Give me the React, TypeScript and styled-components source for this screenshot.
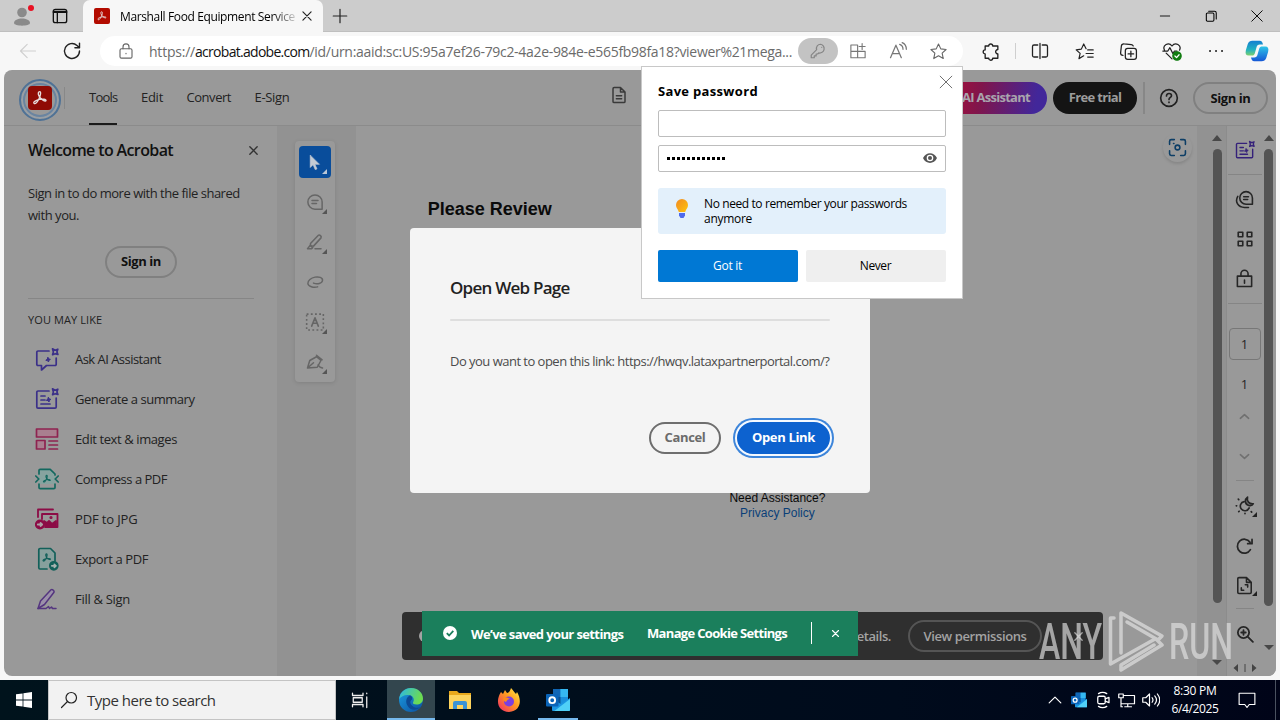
import React, {ReactNode} from 'react'
import styled, {createGlobalStyle} from 'styled-components'

type IconProps = {
  size?: number
  color?: string
  fill?: string
  width?: number
  children: ReactNode
}

const Icon = ({size = 20, color = 'currentColor', fill = 'none', width = 1.5, children}: IconProps) => (
  <svg width={size} height={size} viewBox="0 0 24 24" fill={fill} stroke={color} strokeWidth={width}
    strokeLinecap="round" strokeLinejoin="round">
    {children}
  </svg>
)

const acrobatPath = 'M4.500 18.500c-1.500-1.600 3-4 7-4.700s8.500-.3 8 1.400-5.800-.8-8.300-4.900S10 4 11.700 4s1.300 4.800-1.200 9.500S6 20 4.500 18.500z'
const sparkle = 'M17.500 1.800l2.600 1.400 2.700-1-.9 2.700 1 2.600-2.700-.8-2.600 1 .8-2.800z'

const AcrobatMark = ({size, color, round}: { size: number, color: string, round: number }) => (
  <svg width={size} height={size} viewBox="0 0 24 24">
    <rect width="24" height="24" rx={round} fill={color}/>
    <path d={acrobatPath} transform="translate(2.400 2.400) scale(.8)" fill="none" stroke="#e6dcdc" strokeWidth="1.700"/>
  </svg>
)

const SummaryIcon = ({size = 24, color = '#3b3089'}) => (
  <Icon size={size} color={color} width={1.700}>
    <path d="M14 4H3a1.200 1.200 0 0 0-1.200 1.200V20A1.200 1.200 0 0 0 3 21.200h17a1.200 1.200 0 0 0 1.200-1.200v-9"/>
    <path d="M6 9h4M6 13h4M6 17h9"/>
    <path d={sparkle}/>
    <path d="M13.500 10.500l.8 1.400 1.600.5-1.500.9-.4 1.700-1-1.400-1.700-.3 1.300-1z" fill={color} strokeWidth={1}/>
  </Icon>
)

const OutlookIcon = ({size}: { size: number }) => (
  <svg width={size} height={size} viewBox="0 0 24 24">
    <path d="M7 1h15v16H7z" fill="#1a8fdc"/>
    <path d="M7 1h7.500v8H7z" fill="#1066b5"/>
    <path d="M14.500 1H22v8h-7.500z" fill="#35b8f1"/>
    <path d="M7 9h7.500v7H7z" fill="#0b5091"/>
    <path d="M6 11l9 5 9-6v12a1 1 0 0 1-1 1H7a1 1 0 0 1-1-1z" fill="#1b96e3"/>
    <path d="M9 22.500L24 11v11a1 1 0 0 1-1 1H8z" fill="#50d0f7"/>
    <rect y="6" width="12.500" height="12.500" rx="1" fill="#0a64b8"/>
    <circle cx="6.200" cy="12.200" r="2.900" fill="none" stroke="#fff" strokeWidth="1.900"/>
  </svg>
)

const tools = [
  {
    name: 'Ask AI Assistant', spacing: -0.53, icon: (
      <Icon size={24} color="#3b3089" width={1.700}>
        <path d="M14 4H3a1.200 1.200 0 0 0-1.200 1.200v12A1.200 1.200 0 0 0 3 18.500h3.500V23l5-4.500H20a1.200 1.200 0 0 0 1.200-1.300V11"/>
        <path d={sparkle}/>
        <path d="M13 10.500l.8 1.400 1.600.5-1.500.9-.4 1.700-1-1.400-1.700-.3 1.300-1z" fill="#3b3089" strokeWidth={1}/>
      </Icon>
    ),
  },
  {name: 'Generate a summary', spacing: -0.46, icon: <SummaryIcon/>},
  {
    name: 'Edit text & images', spacing: -0.4, icon: (
      <Icon size={24} color="#8e2350" width={1.700}>
        <rect x="1.500" y="2" width="21" height="8" fill="#a97f8f"/>
        <rect x="1.500" y="13.500" width="8.500" height="8.500" fill="#a97f8f"/>
        <path d="M14 14h8.500M14 18h8.500M14 22h8.500"/>
      </Icon>
    ),
  },
  {
    name: 'Compress a PDF', spacing: -0.5, icon: (
      <Icon size={24} color="#13685f" width={1.700}>
        <path d="M4 7V3.500A1.200 1.200 0 0 1 5.200 2.300h10L20 7v10H4z" fill="#86a39f" stroke="none"/>
        <path d="M4 7V3.500A1.200 1.200 0 0 1 5.200 2.300h10L20 7v1M4 17v3.500a1.200 1.200 0 0 0 1.200 1.200h13.600A1.200 1.200 0 0 0 20 20.500V17"/>
        <path d="M.8 9l3 3-3 3M23.200 9l-3 3 3 3"/>
        <path d={acrobatPath} transform="translate(6.500 6.500) scale(.45)" strokeWidth={2.400}/>
      </Icon>
    ),
  },
  {
    name: 'PDF to JPG', spacing: -0.14, icon: (
      <Icon size={24} color="#8c0c46" width={1.800}>
        <path d="M3 10V2.500h15M10 20h12.500V7H7v5"/>
        <path d="M9 14l3 2 2-2 3 3 4-3v6H11z" fill="#8c0c46"/>
        <circle cx="16" cy="10.500" r=".7"/>
        <circle cx="5" cy="17.500" r="4.200" fill="#8c0c46"/>
        <path d="M2.800 17.500h4M5.500 16l1.700 1.500L5.500 19" stroke="#a9a0a4"/>
      </Icon>
    ),
  },
  {
    name: 'Export a PDF', spacing: -0.39, icon: (
      <Icon size={24} color="#13605a" width={1.700}>
        <path d="M12 22H5a1.200 1.200 0 0 1-1.200-1.200V2.700A1.200 1.200 0 0 1 5 1.500h10.500L20 6v8" fill="#87a09d"/>
        <path d={acrobatPath} transform="translate(6 5) scale(.48)" strokeWidth={2.400}/>
        <circle cx="18.800" cy="18.800" r="4" fill="#13605a"/>
        <path d="M16.800 18.800h4M19.300 17.300l1.700 1.500-1.700 1.500" stroke="#a6b3b1"/>
      </Icon>
    ),
  },
  {
    name: 'Fill & Sign', spacing: -0.29, icon: (
      <Icon size={24} color="#54357f" width={1.500}>
        <path d="M3 21.500l2.500-7.500L16 2.800c1-.9 3.800.7 3 2.500L9.500 17.500z" fill="#9b90a9"/>
        <path d="M3 21.500h8l2.500-2 1 2 2-1.500 1 1.500H21"/>
      </Icon>
    ),
  },
]

const quickTools = [
  {
    name: 'select', corner: true, selected: true,
    icon: <Icon size={17} color="#c4cbd4" fill="#c4cbd4" width={1}><path d="M6 2v17l4-4 3 7 2.500-1-3-6.500h6z"/></Icon>,
  },
  {
    name: 'comment', corner: true,
    icon: <Icon size={18} width={2}><path d="M12 2.500a9.500 9.500 0 1 0 0 19h9.500V12A9.500 9.500 0 0 0 12 2.500zM8 10h8M8 14h6"/></Icon>,
  },
  {
    name: 'highlight', corner: true,
    icon: <Icon size={18} width={2}><path d="M6 14L16.500 3c1.500-1.300 4.800 1.500 3.500 3.500L10 17.500l-4-.5z"/><path d="M2 21l3.500-4.500L9 19.500 7.500 21zM12 21h8"/></Icon>,
  },
  {
    name: 'draw',
    icon: <Icon size={18} width={2}><path d="M10 13.500c5 2 11.500.5 12-3.500C22.500 6 17 4.500 12 5.500S2 10 2.500 14s7.500 6 13 4.500"/></Icon>,
  },
  {
    name: 'text', corner: true,
    icon: (
      <Icon size={20} width={1.900}>
        <rect x="2" y="2.500" width="20" height="19" strokeDasharray="2.200 2.800" strokeLinecap="butt"/>
        <path d="M8 17l4-10 4 10M9.500 13.500h5"/>
      </Icon>
    ),
  },
  {
    name: 'sign', corner: true,
    icon: <Icon size={18} width={2}><path d="M2 20l3-10 9-5 6 5-5 9zM14 3l7.500 6M2 20l8-7M16 16l3 3 3 1"/></Icon>,
  },
]

export default function App() {
  return (
    <Screen>
      <GlobalStyle/>
      <TabStrip/>
      <AddressRow/>
      <PageFrame>
        <Header/>
        <PageBody>
          <Sidebar/>
          <QuickBar/>
          <Document/>
          <ScrollBar bottom={603} arrow={663}/>
          <Rail/>
          <ScrollBar bottom={606} arrow={648} wide/>
        </PageBody>
      </PageFrame>
      <Taskbar/>
      <PermissionToast/>
      <OpenDialog/>
      <CookieToast/>
      <PasswordPopup/>
      <Watermark/>
    </Screen>
  )
}

const TabStrip = () => (
  <Strip>
    <StripIcon $width={44}>
      <svg width="24" height="24" viewBox="0 0 24 24">
        <circle cx="12" cy="8.500" r="4.800" fill="#8a8a8a"/>
        <path d="M4 19c0-6 16-6 16 0 0 3.500-16 3.500-16 0z" fill="#8a8a8a"/>
        <circle cx="21" cy="4" r="3" fill="#e81123"/>
      </svg>
    </StripIcon>
    <StripIcon $width={32}>
      <Icon size={16} color="#111" width={2}><rect x="2" y="2" width="20" height="20" rx="3"/><path d="M2 6.500h20M8 6v16M2 5h20"/></Icon>
    </StripIcon>
    <Tab>
      <AcrobatMark size={16} color="#b30b00" round={3}/>
      <TabTitle>Marshall Food Equipment Service</TabTitle>
      <Icon size={14} color="#222" width={2}><path d="M5 5l14 14M19 5L5 19"/></Icon>
    </Tab>
    <StripIcon $width={34}><Icon size={18} color="#222" width={1.600}><path d="M12 3v18M3 12h18"/></Icon></StripIcon>
    <WindowButtons>
      <StripIcon $width={46}><Icon size={14} color="#000"><path d="M4 12h16"/></Icon></StripIcon>
      <StripIcon $width={46}>
        <Icon size={14} color="#000" width={1.800}><rect x="4" y="7" width="13" height="14" rx="2"/><path d="M8 4h10a3 3 0 0 1 3 3v10"/></Icon>
      </StripIcon>
      <StripIcon $width={46}><Icon size={14} color="#000" width={1.600}><path d="M3 3l18 18M21 3L3 21"/></Icon></StripIcon>
    </WindowButtons>
  </Strip>
)

const AddressRow = () => (
  <Toolbar>
    <ToolCell $width={56}><Icon size={20} color="#cfcfcf" width={1.400}><path d="M21 12H3M11 4l-8 8 8 8"/></Icon></ToolCell>
    <ToolCell $width={32}><Icon size={20} color="#222" width={1.700}><path d="M21 12a9 9 0 1 1-3-6.700L21 8M21 2.500V8h-5.500"/></Icon></ToolCell>
    <Address>
      <Icon size={18} color="#666"><rect x="4" y="9" width="16" height="12.500" rx="2"/><path d="M8 9V6.500a4 4 0 0 1 8 0V9M12 15v.5"/></Icon>
      <Url>
        <Text $size={14} $spacing={-0.22}>https://</Text>
        <Text $size={14} $spacing={-0.71} $color="#111">acrobat.adobe.com</Text>
        <Text $size={14} $spacing={-0.31}>/id/urn:aaid:sc:US:95a7ef26-79c2-4a2e-984e-e565fb98fa18?viewer%21mega...</Text>
      </Url>
      <KeyPill>
        <Icon size={18} color="#858585" width={1.600}><path d="M15.500 3a5.500 5.500 0 0 0-5.300 7.200L3 17.500V21h4v-2.500h2.500V16h2l1.500-1.400A5.500 5.500 0 1 0 15.500 3zM17 7v.1"/></Icon>
      </KeyPill>
      <ToolCell $width={40}>
        <Icon size={18} color="#777"><path d="M2.500 4h9v17h-9zM2.500 12.500h19V21h-19M17.500 2v8M13.500 6h8"/></Icon>
      </ToolCell>
      <ToolCell $width={40}>
        <Icon size={20} color="#777"><path d="M3 20L9.500 5 16 20M5.500 15h8M14 4c3 1 4 3 4 6M17 2c4 1.500 5 4.500 5 8"/></Icon>
      </ToolCell>
      <ToolCell $width={40}>
        <Icon size={19} color="#666" width={1.400}><path d="M12 2.500l2.900 6.200 6.700.8-5 4.600 1.400 6.800-6-3.400-6 3.400 1.400-6.800-5-4.600 6.700-.8z"/></Icon>
      </ToolCell>
    </Address>
    <PuzzleCell>
      <Icon size={19} color="#222" width={1.700}><path d="M8.500 5a2.500 2.500 0 0 1 5 0H20v4.500a2.600 2.600 0 1 0 0 5.500v5.500h-6.500a2.500 2.500 0 0 1-5 0H4V15a2.500 2.500 0 0 1 0-5V5z"/></Icon>
    </PuzzleCell>
    <ToolDivider/>
    <ToolCell $width={44}>
      <Icon size={18} color="#222" width={1.700}><path d="M9 4H4a2 2 0 0 0-2 2v12a2 2 0 0 0 2 2h5M15 4h5a2 2 0 0 1 2 2v12a2 2 0 0 1-2 2h-5M12 2v20"/></Icon>
    </ToolCell>
    <ToolCell $width={44}>
      <Icon size={19} color="#222" width={1.500}><path d="M14 8.500L11 2.500 8 9l-6.500.9 5 4.500L5 21l6-3.500M16 10h7M14 14.500h9M16 19h7"/></Icon>
    </ToolCell>
    <ToolCell $width={44}>
      <Icon size={19} color="#222" width={1.600}>
        <rect x="8" y="8" width="14" height="14" rx="3"/>
        <path d="M15 11.500v7M11.500 15h7M5 17a3 3 0 0 1-3-3l1-9a3 3 0 0 1 3.500-2.500l9 .8A3 3 0 0 1 18 5"/>
      </Icon>
    </ToolCell>
    <ToolCell $width={44}>
      <Icon size={20} color="#222" width={1.500}>
        <path d="M3 11C0 5 8 .5 12 6c4-5.500 12-1 9 5M1 12h6l2.500-4L13 15l2-3h3M5 14.500l7 7"/>
        <circle cx="18" cy="18" r="5" fill="#107c10" stroke="#107c10"/>
        <path d="M15.500 18l2 2 3-3.500" stroke="#fff"/>
      </Icon>
    </ToolCell>
    <ToolCell $width={44}>
      <Icon size={18} color="#222" width={2.600}><path d="M4 12h.1M12 12h.1M20 12h.1"/></Icon>
    </ToolCell>
    <ToolCell $width={38}>
      <svg width="24" height="24" viewBox="0 0 26 26">
        <defs>
          <linearGradient id="copLeft" x1="0" y1="0" x2="0" y2="1">
            <stop offset="0" stopColor="#157fd1"/><stop offset=".6" stopColor="#22b2c0"/><stop offset="1" stopColor="#7fd06c"/>
          </linearGradient>
          <linearGradient id="copRight" x1="0" y1="0" x2="0" y2="1">
            <stop offset="0" stopColor="#2ec5e8"/><stop offset="1" stopColor="#1558d6"/>
          </linearGradient>
        </defs>
        <path d="M8 2h8c2 0 3 1.500 3.500 4H16c-2 0-3 1-3.500 3l-2 7c-.6 1.500-1.500 2-3 2H4c-3 0-4-2-3-6l2-6.500C4 3 5.500 2 8 2z" fill="url(#copLeft)"/>
        <path d="M18 24h-8c-2 0-3-1.500-3.500-4H10c2 0 3-1 3.500-3l2-7c.6-1.500 1.500-2 3-2H22c3 0 4 2 3 6l-2 6.500c-1 2.500-2.500 3.500-5 3.500z" fill="url(#copRight)"/>
      </svg>
    </ToolCell>
  </Toolbar>
)

const Header = () => (
  <HeaderBar>
    <Logo><AcrobatMark size={24} color="#8f0b04" round={4}/></Logo>
    <LogoDivider/>
    <Menu>
      <MenuItem $active><Text $size={13} $spacing={-0.76}>Tools</Text></MenuItem>
      <MenuItem><Text $size={13} $spacing={-0.27}>Edit</Text></MenuItem>
      <MenuItem><Text $size={13} $spacing={-0.46}>Convert</Text></MenuItem>
      <MenuItem><Text $size={13} $spacing={-0.31}>E-Sign</Text></MenuItem>
    </Menu>
    <FileIcon>
      <Icon size={18} color="#3a3a3a" width={2}><path d="M14 2H5.500A1.500 1.500 0 0 0 4 3.500v17A1.500 1.500 0 0 0 5.500 22h13a1.500 1.500 0 0 0 1.500-1.500V8zM14 2v6h6M8.500 13h7M8.500 17h7"/></Icon>
    </FileIcon>
    <HeaderActions>
      <AiButton><Text $size={13} $weight={700} $spacing={-0.72}>AI Assistant</Text></AiButton>
      <TrialButton><Text $size={13} $weight={700} $spacing={-0.66}>Free trial</Text></TrialButton>
      <HeaderDivider/>
      <Icon size={20} color="#222" width={2}><circle cx="12" cy="12" r="10"/><path d="M9 9.500c0-4 6-3.500 6-.3 0 2-3 2.200-3 4.500M12 17v.3"/></Icon>
      <OutlineButton $width={75}><Text $size={13} $weight={700} $spacing={-0.42}>Sign in</Text></OutlineButton>
    </HeaderActions>
  </HeaderBar>
)

const Sidebar = () => (
  <Side>
    <SideHead>
      <Text $size={16} $weight={600} $spacing={-0.62} $color="#111">Welcome to Acrobat</Text>
      <Icon size={11} color="#333" width={3}><path d="M4 4l16 16M20 4L4 20"/></Icon>
    </SideHead>
    <SideText>
      <Text $size={13} $spacing={-0.48}>Sign in to do more with the file shared</Text>
      <Text $size={13} $spacing={-0.45}>with you.</Text>
    </SideText>
    <OutlineButton $width={72}><Text $size={13} $weight={700} $spacing={-0.42}>Sign in</Text></OutlineButton>
    <SideRule/>
    <SideLabel><Text $size={11} $spacing={0.1}>YOU MAY LIKE</Text></SideLabel>
    {tools.map(tool => (
      <SideItem key={tool.name}>
        {tool.icon}
        <Text $size={13} $spacing={tool.spacing}>{tool.name}</Text>
      </SideItem>
    ))}
  </Side>
)

const QuickBar = () => (
  <QuickColumn>
    <QuickCard>
      {quickTools.map(tool => (
        <QuickTool key={tool.name} $selected={tool.selected} $corner={tool.corner}>{tool.icon}</QuickTool>
      ))}
    </QuickCard>
  </QuickColumn>
)

const Document = () => (
  <DocArea>
    <DocTitle>Please Review</DocTitle>
    <DocTail>your.</DocTail>
    <DocFooter>Need Assistance?<DocLink>Privacy Policy</DocLink></DocFooter>
    <ScanButton>
      <Icon size={19} color="#0d3e66" width={2}>
        <path d="M2 8V4a2 2 0 0 1 2-2h4M16 2h4a2 2 0 0 1 2 2v4M22 16v4a2 2 0 0 1-2 2h-4M8 22H4a2 2 0 0 1-2-2v-4M7 7h.5"/>
        <circle cx="12" cy="12" r="3"/>
      </Icon>
    </ScanButton>
  </DocArea>
)

const ScrollBar = ({bottom, arrow, wide}: { bottom: number, arrow: number, wide?: boolean }) => (
  <Track $wide={wide}>
    <Arrow $up/>
    <Thumb $height={bottom - 149}/>
    <ArrowSpace $height={arrow - bottom - 3}/>
    <Arrow/>
  </Track>
)

const Rail = () => (
  <RailColumn>
    <RailCell $height={48}><SummaryIcon size={20} color="#35217a"/></RailCell>
    <RailRule/>
    <RailCell $height={49}>
      <Icon size={19} width={2}><path d="M14 2a8 8 0 1 0 0 16h8v-8a8 8 0 0 0-8-8zM11 8.500h6M11 12h5M3.500 8C-.5 15 4 22 12 22h5"/></Icon>
    </RailCell>
    <RailCell $height={30}>
      <Icon size={18} width={2.200}><path d="M3 3h6v6H3zM15 3h6v6h-6zM3 15h6v6H3zM15 15h6v6h-6z"/></Icon>
    </RailCell>
    <RailCell $height={49}>
      <Icon size={19} width={2}><rect x="3" y="9" width="18" height="13"/><path d="M7.500 9V6a4.500 4.500 0 0 1 9 0v3M12 14v4"/></Icon>
    </RailCell>
    <RailRule/>
    <PageBox>1</PageBox>
    <RailCell $height={48}>1</RailCell>
    <RailCell $height={16} $muted><Icon size={11} width={3.500}><path d="M3 16l9-8 9 8"/></Icon></RailCell>
    <RailCell $height={56} $top={8} $muted><Icon size={11} width={3.500}><path d="M3 8l9 8 9-8"/></Icon></RailCell>
    <RailRule $short/>
    <RailCell $height={48} $corner>
      <Icon width={2}>
        <path d="M11 8a5.500 5.500 0 1 0 6 7.500"/>
        <path d="M15 2.500c-1 5 1.500 8.500 7 8-2 4-9.500 2.500-9.500-3 0-2.500 1-4 2.500-5z" fill="#7d7d7d"/>
        <path d="M1.500 13h.5M4 5l.5.500M4.500 20l.5-.5M12 22.500V22M19.500 20l.5.500"/>
      </Icon>
    </RailCell>
    <RailCell $height={34}>
      <Icon size={19} width={2.200}><path d="M19.500 16A8.800 8.800 0 1 1 19 6.500M21.500 3v5.500H16"/></Icon>
    </RailCell>
    <RailCell $height={45} $corner>
      <Icon size={19} width={2}><path d="M14.500 2H5a1.500 1.500 0 0 0-1.500 1.500v17A1.500 1.500 0 0 0 5 22h14a1.500 1.500 0 0 0 1.500-1.500V8zM14.500 2v6h6M13 11h3v3M8 15v3h3"/></Icon>
    </RailCell>
    <RailRule $short/>
    <RailCell $height={50}>
      <Icon size={18} width={2.400}><circle cx="10" cy="10" r="7.500"/><path d="M10 7v6M7 10h6M15.500 15.500l7 7"/></Icon>
    </RailCell>
    <MiniScroll>
      <svg width="26" height="10" viewBox="0 0 26 10">
        <path d="M6 1v8L1.500 5zM20 1v8l4.500-4z" fill="#444"/><path d="M13 1v8" stroke="#444"/>
      </svg>
    </MiniScroll>
  </RailColumn>
)

const OpenDialog = () => (
  <Dialog>
    <DialogTitle><Text $size={17} $weight={600} $spacing={-0.76}>Open Web Page</Text></DialogTitle>
    <DialogRule/>
    <Text $size={13} $spacing={-0.52} $color="#4b4b4b">Do you want to open this link: https://hwqv.lataxpartnerportal.com/?</Text>
    <DialogActions>
      <DialogButton><Text $size={13} $weight={700} $spacing={-0.34}>Cancel</Text></DialogButton>
      <DialogButton $primary><Text $size={13} $weight={700} $spacing={-0.34}>Open Link</Text></DialogButton>
    </DialogActions>
  </Dialog>
)

const PasswordPopup = () => (
  <Popup>
    <PopupTitle><Text $size={13} $weight={700} $spacing={0.32}>Save password</Text></PopupTitle>
    <PopupClose><Icon size={14} color="#666" width={1.600}><path d="M2 2l20 20M22 2L2 22"/></Icon></PopupClose>
    <Field/>
    <Field>
      <Dots>{Array.from({length: 12}, (_, i) => <Dot key={i}/>)}</Dots>
      <svg width="16" height="12" viewBox="0 0 16 12">
        <path d="M1 6c3-6.500 11-6.500 14 0-3 6.500-11 6.500-14 0z" fill="#555"/>
        <circle cx="8" cy="6" r="3.300" fill="#fff"/><circle cx="8" cy="6" r="2" fill="#555"/>
      </svg>
    </Field>
    <Hint>
      <Bulb width="14" height="22" viewBox="0 0 14 22">
        <defs>
          <linearGradient id="bulb" x1="0" y1="0" x2="1" y2="1"><stop offset="0" stopColor="#f08a24"/><stop offset="1" stopColor="#ffc40c"/></linearGradient>
        </defs>
        <path d="M7 1a6 6 0 0 1 6 6c0 3-2 4-2.800 7H3.800C3 11 1 10 1 7a6 6 0 0 1 6-6z" fill="url(#bulb)"/>
        <path d="M4 15h6v2.500L8.500 20h-3L4 17.500z" fill="#4f6bed"/>
      </Bulb>
      <HintText>
        <Text $size={12} $spacing={-0.4}>No need to remember your passwords</Text>
        <Text $size={12} $spacing={-0.29}>anymore</Text>
      </HintText>
    </Hint>
    <PopupActions>
      <PopupButton $primary><Text $size={12} $spacing={-0.28}>Got it</Text></PopupButton>
      <PopupButton><Text $size={12} $spacing={-0.38}>Never</Text></PopupButton>
    </PopupActions>
  </Popup>
)

const PermissionToast = () => (
  <DarkToast>
    <ToastInfo/>
    <Text $size={13} $weight={600} $spacing={-0.43}>See details.</Text>
    <ToastButton><Text $size={13} $weight={600} $spacing={-0.39}>View permissions</Text></ToastButton>
    <Icon size={11} width={3}><path d="M4 4l16 16M20 4L4 20"/></Icon>
  </DarkToast>
)

const CookieToast = () => (
  <GreenToast>
    <svg width="14" height="14" viewBox="0 0 14 14">
      <circle cx="7" cy="7" r="7" fill="#fff"/><path d="M3.800 7.200l2.300 2.300 4.200-4.700" fill="none" stroke="#1b7f5c" strokeWidth="1.800"/>
    </svg>
    <ToastMessage><Text $size={13} $weight={700} $spacing={-0.61}>We’ve saved your settings</Text></ToastMessage>
    <Text $size={13} $weight={700} $spacing={-0.67}>Manage Cookie Settings</Text>
    <ToastLine/>
    <Icon size={9} color="#fff" width={3}><path d="M4 4l16 16M20 4L4 20"/></Icon>
  </GreenToast>
)

const Taskbar = () => (
  <Bar>
    <BarCell $width={48}>
      <svg width="16" height="16" viewBox="0 0 16 16" fill="#fff"><path d="M0 2.300l6.600-.9v6.200H0zM7.400 1.300L16 0v7.600H7.400zM0 8.400h6.600v6.200L0 13.700zM7.400 8.400H16V16l-8.600-1.200z"/></svg>
    </BarCell>
    <Search>
      <Icon size={18} color="#222" width={1.600}><circle cx="15" cy="9" r="7"/><path d="M10 14l-8 8"/></Icon>
      <Text $size={15} $spacing={-0.5} $color="#333">Type here to search</Text>
    </Search>
    <TaskView>
      <Icon size={18} color="#eee" width={1.700}><path d="M2 3v3h14V3M2 21v-3h14v3M3 9h12v6H3zM21 3v.5M21 8v14"/></Icon>
    </TaskView>
    <BarCell $width={48} $active>
      <svg width="26" height="26" viewBox="0 0 26 26">
        <defs>
          <linearGradient id="edgeTop" x1="0" y1="0" x2="1" y2=".3"><stop offset="0" stopColor="#2bb7e8"/><stop offset="1" stopColor="#6ddc4f"/></linearGradient>
          <linearGradient id="edgeLow" x1="0" y1="0" x2="1" y2="1"><stop offset="0" stopColor="#1b9de2"/><stop offset="1" stopColor="#0c4f9e"/></linearGradient>
        </defs>
        <circle cx="13" cy="13" r="12" fill="url(#edgeLow)"/>
        <path d="M1.200 12C2 5 7 1 13 1c7 0 12 5 12 10.500 0 4-3 6-6.500 6-2.500 0-4-1-3.500-2 1.500-2 1-6-3-7.200C8 7 3 9 1.200 12z" fill="url(#edgeTop)"/>
        <path d="M12 8.300c-4 2-5 7-2 11.200 3 4 8 4.500 13 .5-3 1.500-7 1-9.500-2-1.800-2.200-1.200-4.500.500-5.500.700-2-.5-3.500-2-4.200z" fill="#0d4a94"/>
      </svg>
    </BarCell>
    <BarCell $width={49}>
      <svg width="22" height="20" viewBox="0 0 22 20">
        <path d="M0 1h8l2 2h12v16H0z" fill="#e9a91c"/><path d="M0 5h22v14H0z" fill="#fdd45d"/>
        <path d="M4 19v-6a2 2 0 0 1 2-2h10a2 2 0 0 1 2 2v6h-4v-4H8v4z" fill="#3a94d6"/>
      </svg>
    </BarCell>
    <BarCell $width={49}>
      <svg width="24" height="24" viewBox="0 0 24 24">
        <defs>
          <linearGradient id="fox" x1="1" y1="0" x2="0" y2="1"><stop offset="0" stopColor="#fff04a"/><stop offset=".45" stopColor="#ff9a1f"/><stop offset="1" stopColor="#f0246b"/></linearGradient>
        </defs>
        <path d="M4 4l2 2 2-4 2 3c2 0 3-2 4-5 2 2 3 4 5 6l1-2c5 8 4 19-8 20C1 24-2 13 4 4z" fill="url(#fox)"/>
        <circle cx="12" cy="13.500" r="5" fill="#7a3fe0"/>
        <path d="M6 10c3-1 5-.5 7 1-2 0-3 1-4 3-2-.500-3-2-3-4z" fill="#ff8a1c"/>
      </svg>
    </BarCell>
    <BarCell $width={50} $running><OutlookIcon size={24}/></BarCell>
    <Tray>
      <BarCell $width={24}><Icon size={14} color="#fff" width={2}><path d="M2 17L12 7l10 10"/></Icon></BarCell>
      <BarCell $width={24}><OutlookIcon size={16}/></BarCell>
      <BarCell $width={24}>
        <Icon size={18} color="#fff" width={1.700}><rect x="5" y="7" width="10" height="10" rx="2"/><path d="M15 10.500l5-2v7l-5-2M6 3.500c3-2 8-2 11 0M6 20.500c3 2 8 2 11 0"/></Icon>
      </BarCell>
      <BarCell $width={24}>
        <Icon size={18} color="#fff" width={1.600}><path d="M8 6h14v11H5M13 17v4M9 21h9M1 4h6v5H1zM4 9v12h2"/></Icon>
      </BarCell>
      <BarCell $width={24}>
        <Icon size={18} color="#fff" width={1.600}><path d="M1 9h4l5-5v16l-5-5H1zM13.500 9c1.500 2 1.500 4 0 6M17 6.500c3 3.500 3 7.500 0 11M20.500 4c4 5 4 11 0 16"/></Icon>
      </BarCell>
      <Clock>
        <Text $size={12} $spacing={-0.27}>8:30 PM</Text>
        <Text $size={12} $spacing={-0.37}>6/4/2025</Text>
      </Clock>
      <BarCell $width={48}><Icon size={18} color="#fff"><path d="M1.500 3h21v15H15l-3 4-3-4H1.500z"/></Icon></BarCell>
      <DesktopEdge/>
    </Tray>
  </Bar>
)

const Watermark = () => (
  <Mark width="205" height="70" viewBox="0 0 205 70">
    <g fill="#e2e2e2" fontFamily="Roboto, sans-serif" fontWeight="500" fontSize="50">
      <text x="4" y="53" textLength="63" lengthAdjust="spacingAndGlyphs">ANY</text>
      <text x="134" y="53" textLength="64" lengthAdjust="spacingAndGlyphs">RUN</text>
    </g>
    <g fill="none" stroke="#e6e6e6" strokeWidth="3.500" strokeLinejoin="round" strokeLinecap="round">
      <path d="M86 47V7l41 23-4 4-31-18"/>
      <path d="M79 12h-3.500v46L120 33"/>
      <path d="M86 64v-5l33-20M86 64l41-25-5-5"/>
    </g>
  </Mark>
)

const GlobalStyle = createGlobalStyle`
  * {
    box-sizing: border-box;
  }

  body {
    margin: 0;
    overflow: hidden;
    font-family: "Open Sans", "Noto Sans", sans-serif;
  }

  svg {
    display: block;
    flex-shrink: 0;
  }
`

const Screen = styled.div`
  position: relative;
  display: flex;
  flex-direction: column;
  width: 1280px;
  height: 720px;
  overflow: hidden;
  background: #f7f7f7;
`

const Text = styled.span<{ $size: number, $spacing?: number, $weight?: number, $color?: string }>`
  font-size: ${({$size}) => $size}px;
  font-weight: ${({$weight}) => $weight ?? 400};
  letter-spacing: ${({$spacing}) => $spacing ?? 0}px;
  color: ${({$color}) => $color ?? 'inherit'};
  white-space: nowrap;
`

const Strip = styled.div`
  display: flex;
  height: 32px;
  background: #ccc;
  box-shadow: inset 0 -1px #bfbfbf;
`

const StripIcon = styled.div<{ $width: number }>`
  display: flex;
  align-items: center;
  justify-content: center;
  width: ${({$width}) => $width}px;
  height: 32px;
`

const Tab = styled.div`
  display: flex;
  align-items: center;
  width: 240px;
  margin-left: 7px;
  padding-left: 11px;
  border-radius: 7px 7px 0 0;
  background: #f7f7f7;
`

const TabTitle = styled.div`
  width: 176px;
  margin: 0 4px 0 10px;
  overflow: hidden;
  font-size: 12px;
  letter-spacing: -0.37px;
  white-space: nowrap;
  mask-image: linear-gradient(90deg, #000 152px, transparent 180px);
`

const WindowButtons = styled.div`
  display: flex;
  margin-left: auto;
`

const Toolbar = styled.div`
  display: flex;
  align-items: center;
  height: 38px;
`

const ToolCell = styled.div<{ $width: number }>`
  display: flex;
  align-items: center;
  justify-content: center;
  width: ${({$width}) => $width}px;
`

const PuzzleCell = styled(ToolCell).attrs({$width: 52})`
  padding-left: 5px;
`

const Address = styled.div`
  display: flex;
  align-items: center;
  width: 863px;
  height: 30px;
  margin-left: 12px;
  padding: 0 5px 0 17px;
  border-radius: 15px;
  background: #fff;
`

const Url = styled.div`
  display: flex;
  width: 649px;
  margin-left: 14px;
  color: #6b6b6b;
`

const KeyPill = styled.div`
  display: flex;
  align-items: center;
  justify-content: center;
  width: 40px;
  height: 26px;
  border-radius: 13px;
  background: #c3c3c3;
`

const ToolDivider = styled.div`
  width: 1px;
  height: 16px;
  margin-right: 2px;
  background: #cfcfcf;
`

const PageFrame = styled.div`
  display: flex;
  flex-direction: column;
  height: 606px;
  margin: 0 4px 4px;
  border-radius: 8px;
  overflow: hidden;
  background: #999;
  color: #222;
`

const HeaderBar = styled.div`
  display: flex;
  height: 56px;
  padding: 0 8px 0 15px;
  border-bottom: 1px solid #8b8b8b;
`

const Logo = styled.div`
  display: flex;
  align-items: center;
  justify-content: center;
  width: 42px;
  height: 42px;
  margin-top: 9px;
  border: 2px solid #4f7296;
  border-radius: 50%;
  box-shadow: inset 0 0 0 2px #9a9fa4, inset 0 0 0 4px #6a84a0;

  svg {
    margin-bottom: 5px;
  }
`

const LogoDivider = styled.div`
  width: 1px;
  height: 22px;
  margin: 17px 24px 0 3px;
  background: #888;
`

const Menu = styled.div`
  display: flex;
  gap: 23.5px;
`

const MenuItem = styled.div<{ $active?: boolean }>`
  display: flex;
  align-items: center;
  height: 55px;
  border-bottom: 2px solid ${({$active}) => $active ? '#1b1b1b' : 'transparent'};
`

const FileIcon = styled.div`
  margin: 16px 0 0 320px;
`

const HeaderActions = styled.div`
  display: flex;
  align-items: center;
  height: 32px;
  margin: 12px 0 0 auto;
`

const AiButton = styled.div`
  display: flex;
  align-items: center;
  justify-content: flex-end;
  width: 122px;
  height: 32px;
  padding: 0 17px 2px 0;
  border-radius: 16px;
  background: linear-gradient(100deg, #a5103a 20%, #80154b 45%, #42279a 90%);
  color: #a9a4ad;
`

const TrialButton = styled.div`
  display: flex;
  align-items: center;
  justify-content: center;
  width: 84px;
  height: 32px;
  margin-left: 6px;
  padding-bottom: 3px;
  border-radius: 16px;
  background: #141414;
  color: #9c9c9c;
`

const HeaderDivider = styled.div`
  width: 2px;
  height: 32px;
  margin: 0 14px 0 6px;
  background: #878787;
`

const OutlineButton = styled.div<{ $width: number }>`
  display: flex;
  align-items: center;
  justify-content: center;
  width: ${({$width}) => $width}px;
  height: 32px;
  border: 2px solid #808080;
  border-radius: 16px;
  color: #111;

  ${HeaderActions} & {
    margin-left: 14px;
  }
`

const PageBody = styled.div`
  display: flex;
  flex: 1;
`

const Side = styled.div`
  display: flex;
  flex-direction: column;
  width: 273px;
  padding: 12px 0 0 24px;

  > ${OutlineButton} {
    margin: 20px 0 0 77px;
    padding-bottom: 2px;
  }
`

const SideHead = styled.div`
  display: flex;
  align-items: center;
  justify-content: space-between;
  width: 231px;
  height: 24px;
`

const SideText = styled.div`
  display: flex;
  flex-direction: column;
  margin-top: 20px;
  line-height: 22px;
`

const SideRule = styled.div`
  width: 226px;
  height: 1px;
  margin: 20px 0 1px;
  background: #868686;
`

const SideLabel = styled.div`
  display: flex;
  height: 16px;
  margin: 12px 0 11px;
  line-height: 16px;
`

const SideItem = styled.div`
  display: flex;
  align-items: center;
  gap: 16px;
  height: 40px;
  padding-left: 7px;
`

const QuickColumn = styled.div`
  width: 79px;
  padding: 15px 0 0 18px;
  background: #929292;
`

const QuickCard = styled.div`
  width: 40px;
  height: 241px;
  padding-top: 1px;
  border-radius: 4px;
  background: #999;
  box-shadow: 0 1px 4px rgba(0, 0, 0, .12);
`

const QuickTool = styled.div<{ $selected?: boolean, $corner?: boolean }>`
  position: relative;
  display: flex;
  align-items: center;
  justify-content: center;
  width: 32px;
  height: 32px;
  margin: 4px 4px 8px;
  border-radius: 4px;
  background: ${({$selected}) => $selected ? '#094d9b' : 'transparent'};
  color: #666;

  &::after {
    content: ${({$corner}) => $corner ? '""' : 'none'};
    position: absolute;
    right: 4px;
    bottom: 4px;
    border-left: 5px solid transparent;
    border-bottom: 5px solid ${({$selected}) => $selected ? '#b9c6d6' : '#555'};
  }
`

const DocArea = styled.div`
  position: relative;
  display: flex;
  flex-direction: column;
  width: 842px;
  padding-top: 71px;
  color: #0a0a0a;
  font-family: "Liberation Sans", sans-serif;
  font-size: 12px;
`

const DocTitle = styled.div`
  padding-left: 72px;
  font-size: 18px;
  font-weight: 700;
  line-height: 24px;
`

const DocTail = styled.div`
  margin-top: 67px;
  padding-right: 314px;
  line-height: 15px;
  text-align: right;
`

const DocFooter = styled.div`
  display: flex;
  flex-direction: column;
  align-items: center;
  margin-top: 188px;
  padding-left: 2px;
  line-height: 15px;
`

const DocLink = styled.span`
  color: #0a3f78;
`

const ScanButton = styled.div`
  position: absolute;
  top: 7px;
  right: 5px;
  display: flex;
  align-items: center;
  justify-content: center;
  width: 29px;
  height: 29px;
  border-radius: 50%;
  box-shadow: 0 2px 3px rgba(0, 0, 0, .12);
`

const Track = styled.div<{ $wide?: boolean }>`
  display: flex;
  flex-direction: column;
  align-items: center;
  width: ${({$wide}) => $wide ? 14 : 29}px;
  padding-top: 9px;
  padding-left: ${({$wide}) => $wide ? 0 : 11}px;
  padding-right: ${({$wide}) => $wide ? 1 : 0}px;
  background: ${({$wide}) => $wide ? '#999' : '#929292'};
`

const Arrow = styled.div<{ $up?: boolean }>`
  border: 5px solid transparent;
  border-top: ${({$up}) => $up ? '0' : '5px solid #484848'};
  border-bottom: ${({$up}) => $up ? '6px solid #484848' : '0'};
`

const Thumb = styled.div<{ $height: number }>`
  width: 9px;
  height: ${({$height}) => $height}px;
  margin-top: 8px;
  border-radius: 5px;
  background: #545454;
`

const ArrowSpace = styled.div<{ $height: number }>`
  height: ${({$height}) => $height}px;
`

const RailColumn = styled.div`
  display: flex;
  flex-direction: column;
  align-items: center;
  width: 36px;
  border-left: 1px solid #8c8c8c;
  color: #262626;
  font-size: 13px;
`

const RailCell = styled.div<{ $height: number, $top?: number, $muted?: boolean, $corner?: boolean }>`
  position: relative;
  display: flex;
  align-items: center;
  justify-content: center;
  width: 32px;
  height: ${({$height}) => $height}px;
  padding-top: ${({$top}) => $top ?? 0}px;
  color: ${({$muted}) => $muted ? '#707070' : 'inherit'};

  &::after {
    content: ${({$corner}) => $corner ? '""' : 'none'};
    position: absolute;
    right: 4px;
    bottom: 12px;
    border-left: 5px solid transparent;
    border-bottom: 5px solid #222;
  }
`

const RailRule = styled.div<{ $short?: boolean }>`
  width: ${({$short}) => $short ? 18 : 34}px;
  height: 1px;
  background: #858585;
`

const PageBox = styled.div`
  display: flex;
  align-items: center;
  justify-content: center;
  width: 32px;
  height: 32px;
  margin-top: 24px;
  border: 1px solid #777;
  border-radius: 4px;
`

const MiniScroll = styled.div`
  display: flex;
  margin-top: auto;
  padding-bottom: 3px;
`

const Dialog = styled.div`
  position: absolute;
  top: 228px;
  left: 410px;
  display: flex;
  flex-direction: column;
  width: 460px;
  height: 265px;
  padding: 48px 40px 0;
  border-radius: 4px;
  background: #f4f4f4;
  line-height: 20px;
`

const DialogTitle = styled.div`
  height: 24px;
  line-height: 24px;
  color: #222;
`

const DialogRule = styled.div`
  height: 2px;
  margin: 19px 0 30px;
  border-radius: 1px;
  background: #dedede;
`

const DialogActions = styled.div`
  display: flex;
  justify-content: flex-end;
  gap: 16px;
  margin-top: 51px;
`

const DialogButton = styled.div<{ $primary?: boolean }>`
  display: flex;
  align-items: center;
  justify-content: center;
  width: ${({$primary}) => $primary ? 93 : 72}px;
  height: 32px;
  padding-bottom: 2px;
  border: 2px solid ${({$primary}) => $primary ? '#0d62cf' : '#6e6e6e'};
  border-radius: 16px;
  background: ${({$primary}) => $primary ? '#0d62cf' : 'transparent'};
  box-shadow: ${({$primary}) => $primary ? '0 0 0 2px #f4f9ff, 0 0 0 4px #3d85da' : 'none'};
  color: ${({$primary}) => $primary ? '#fff' : '#6b6b6b'};
`

const Popup = styled.div`
  position: absolute;
  top: 66px;
  left: 641px;
  display: flex;
  flex-direction: column;
  width: 322px;
  height: 233px;
  padding: 13px 16px 0;
  border: 1px solid #c8c8c8;
  background: #fff;
  color: #000;
`

const PopupTitle = styled.div`
  height: 30px;
  line-height: 20px;
`

const PopupClose = styled.div`
  position: absolute;
  top: 8px;
  right: 9px;
`

const Field = styled.div`
  display: flex;
  align-items: center;
  justify-content: space-between;
  height: 27px;
  margin-bottom: 8px;
  padding: 0 7px 1px 8px;
  border: 1px solid #bdbdbd;
  border-radius: 2px;
`

const Dots = styled.div`
  display: flex;
  gap: 2px;
`

const Dot = styled.i`
  width: 3px;
  height: 3px;
  background: #000;
`

const Hint = styled.div`
  display: flex;
  height: 46px;
  margin-top: 8px;
  padding: 8px 0 0 17px;
  border-radius: 3px;
  background: #e3f0fb;
`

const Bulb = styled.svg`
  margin-top: 2px;
`

const HintText = styled.div`
  display: flex;
  flex-direction: column;
  margin-left: 15px;
  line-height: 15px;
`

const PopupActions = styled.div`
  display: flex;
  gap: 8px;
  margin-top: 16px;
`

const PopupButton = styled.div<{ $primary?: boolean }>`
  display: flex;
  flex: 1;
  align-items: center;
  justify-content: center;
  height: 32px;
  padding: 0 1px 1px 0;
  border-radius: 2px;
  background: ${({$primary}) => $primary ? '#0078d4' : '#efefef'};
  color: ${({$primary}) => $primary ? '#fff' : '#000'};
`

const DarkToast = styled.div`
  position: absolute;
  top: 612px;
  left: 402px;
  display: flex;
  align-items: center;
  justify-content: flex-end;
  width: 701px;
  height: 48px;
  padding-right: 19px;
  border-radius: 4px;
  background: #2f2f2f;
  color: #a3a3a3;
`

const ToastInfo = styled.div`
  width: 12px;
  height: 12px;
  margin: 0 auto 0 17px;
  border-radius: 50%;
  background: #a3a3a3;
`

const ToastButton = styled.div`
  display: flex;
  align-items: center;
  justify-content: center;
  width: 134px;
  height: 32px;
  margin: 0 31px 0 17px;
  border: 2px solid #555;
  border-radius: 16px;
`

const GreenToast = styled.div`
  position: absolute;
  top: 611px;
  left: 422px;
  display: flex;
  align-items: center;
  width: 436px;
  height: 45px;
  padding: 0 0 1px 21px;
  background: #1b7f5c;
  color: #fff;
`

const ToastMessage = styled.div`
  width: 176px;
  margin-left: 14px;
`

const ToastLine = styled.div`
  width: 1px;
  height: 22px;
  margin: 0 19px 0 24px;
  background: #fff;
`

const Bar = styled.div`
  display: flex;
  height: 40px;
  background: linear-gradient(90deg, #00131c, #000b1c 70%, #000418);
`

const BarCell = styled.div<{ $width: number, $active?: boolean, $running?: boolean }>`
  display: flex;
  align-items: center;
  justify-content: center;
  width: ${({$width}) => $width}px;
  height: 40px;
  background: ${({$active, $running}) => $active
    ? 'linear-gradient(#76b9ed, #76b9ed) 0 100% / 100% 2px no-repeat #33464e'
    : $running ? 'linear-gradient(#76b9ed, #76b9ed) 50% 100% / 40px 2px no-repeat' : 'none'};
`

const TaskView = styled(BarCell).attrs({$width: 51})`
  padding-right: 3px;
`

const Search = styled.div`
  display: flex;
  align-items: center;
  gap: 9px;
  width: 288px;
  padding-left: 11px;
  border: 1px solid #c4c4c4;
  background: #f2f2f2;
`

const Tray = styled.div`
  display: flex;
  margin-left: auto;
  color: #fff;
`

const Clock = styled.div`
  display: flex;
  flex-direction: column;
  align-items: center;
  width: 60px;
  padding: 2px 0 0 4px;
  line-height: 18px;
`

const DesktopEdge = styled.div`
  width: 5px;
  margin-left: 4px;
  border-left: 1px solid #4a5260;
`

const Mark = styled.svg`
  position: absolute;
  top: 606px;
  left: 1035px;
  overflow: visible;
  opacity: .66;
`
